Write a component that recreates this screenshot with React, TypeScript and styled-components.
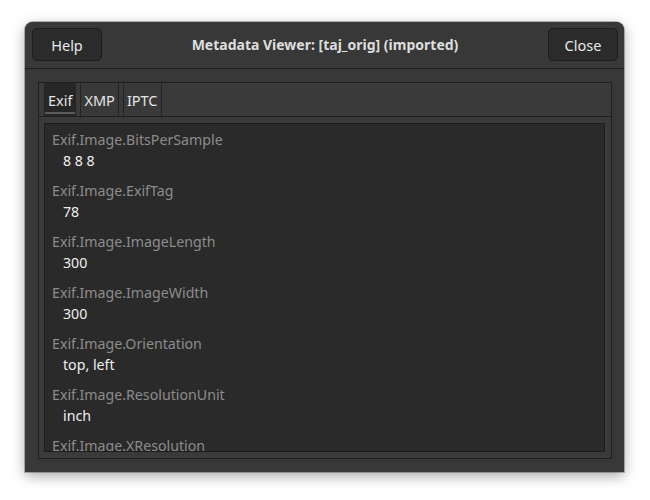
import React from "react";
import styled, { createGlobalStyle } from "styled-components";

const Global = createGlobalStyle`
  html, body { margin: 0; padding: 0; background: #ffffff; }
  body { font-family: "Noto Sans", "Open Sans", sans-serif; }
`;

const Page = styled.div`
  width: 650px;
  height: 500px;
  padding: 22px 0 0 25px;
  box-sizing: border-box;
`;

const Window = styled.div`
  width: 599px;
  height: 450px;
  background: #383838;
  border-radius: 8px 8px 0 0;
  box-shadow: 0 4px 14px rgba(0, 0, 0, 0.35), 0 0 0 1px rgba(0, 0, 0, 0.25);
  display: flex;
  flex-direction: column;
  overflow: hidden;
`;

const HeaderBar = styled.div`
  flex: 0 0 47px;
  box-sizing: border-box;
  border-bottom: 1px solid #1f1f1f;
  display: flex;
  align-items: center;
  justify-content: space-between;
  padding: 0 6px 1px 7px;
  background: #383838;
`;

const Button = styled.button`
  width: 70px;
  height: 33px;
  background: #2b2b2b;
  border: 1px solid #1c1c1c;
  border-radius: 5px;
  color: #e8e8e8;
  font-family: "Noto Sans", "Open Sans", sans-serif;
  font-size: 14.5px;
  padding: 0;
`;

const Title = styled.div`
  color: #dedede;
  font-weight: bold;
  font-size: 14px;
`;

const Body = styled.div`
  flex: 1 1 0;
  min-height: 0;
  padding: 13px 12px 13px 13px;
  display: flex;
`;

const Notebook = styled.div`
  flex: 1;
  min-height: 0;
  border: 1px solid #1f1f1f;
  background: #3a3a3a;
  display: flex;
  flex-direction: column;
`;

const TabBar = styled.div`
  flex: 0 0 33px;
  border-bottom: 1px solid #1f1f1f;
  display: flex;
  padding-left: 5px;
  gap: 4px;
`;

const Tab = styled.div<{ $active?: boolean }>`
  border-left: 1px solid #232323;
  border-right: 1px solid #232323;
  padding: 0 3px;
  display: flex;
  align-items: center;
  color: #e4e4e4;
  font-size: 14.5px;
  background: ${(p) => (p.$active ? "#262626" : "#393939")};
  box-shadow: ${(p) =>
    p.$active ? "inset 0 -2px 0 #262626, inset 0 -4px 0 #5a5a5a" : "none"};
`;

const TabPage = styled.div`
  flex: 1 1 0;
  min-height: 0;
  padding: 6px 6px 6px 5px;
  display: flex;
`;

const Content = styled.div`
  flex: 1;
  min-height: 0;
  background: #2a2a2a;
  border: 1px solid #1c1c1c;
  overflow: hidden;
  padding: 5px 0 0 7px;
`;

const Entry = styled.div`
  margin-bottom: 9px;
`;

const Key = styled.div`
  color: #8c8c8c;
  font-size: 14.2px;
  line-height: 21px;
  white-space: nowrap;
`;

const Value = styled.div`
  color: #eeeeee;
  font-size: 14.2px;
  line-height: 21px;
  padding-left: 11px;
  white-space: nowrap;
`;

const entries: [string, string][] = [
  ["Exif.Image.BitsPerSample", "8 8 8"],
  ["Exif.Image.ExifTag", "78"],
  ["Exif.Image.ImageLength", "300"],
  ["Exif.Image.ImageWidth", "300"],
  ["Exif.Image.Orientation", "top, left"],
  ["Exif.Image.ResolutionUnit", "inch"],
  ["Exif.Image.XResolution", ""],
];

export default function App() {
  return (
    <>
      <Global />
      <Page>
        <Window>
          <HeaderBar>
            <Button>Help</Button>
            <Title>Metadata Viewer: [taj_orig] (imported)</Title>
            <Button>Close</Button>
          </HeaderBar>
          <Body>
            <Notebook>
              <TabBar>
                <Tab $active>Exif</Tab>
                <Tab>XMP</Tab>
                <Tab>IPTC</Tab>
              </TabBar>
              <TabPage>
                <Content>
                  {entries.map(([k, v]) => (
                    <Entry key={k}>
                      <Key>{k}</Key>
                      {v && <Value>{v}</Value>}
                    </Entry>
                  ))}
                </Content>
              </TabPage>
            </Notebook>
          </Body>
        </Window>
      </Page>
    </>
  );
}
